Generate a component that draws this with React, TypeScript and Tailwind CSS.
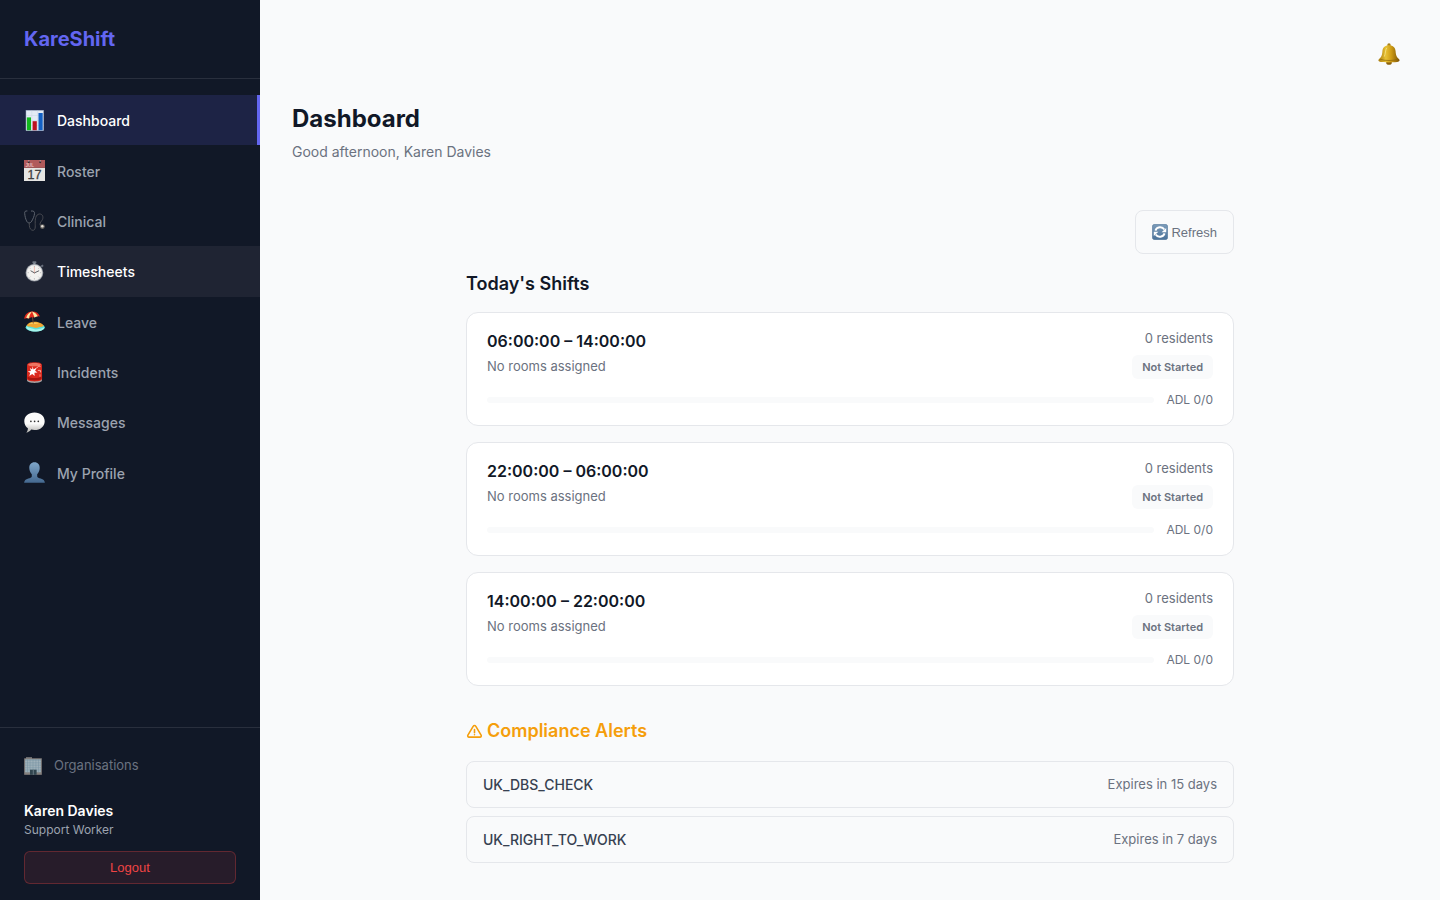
import { useState } from 'react';
import type { ReactNode } from 'react';

const ChartIcon = () => (
  <svg viewBox="0 0 21 21" className="w-[21px] h-[21px] shrink-0" aria-hidden="true">
    <rect x="2" y="0.3" width="17.6" height="20.4" fill="#e3ebf5" />
    <path d="M2 5.5h17.6M2 10.5h17.6M2 15.5h17.6M7.8 0.3v20.4M13.6 0.3v20.4" stroke="#c9d6e6" strokeWidth="0.5" />
    <rect x="2.8" y="7.4" width="4.2" height="13" fill="#12b81e" />
    <rect x="8.6" y="11.2" width="4.2" height="9.2" fill="#bd1220" />
    <rect x="14.5" y="3" width="4.2" height="17.4" fill="#1360c4" />
    <rect x="2" y="0.3" width="17.6" height="20.4" fill="none" stroke="#9fb0c8" strokeWidth="0.5" />
  </svg>
);

const CalendarIcon = () => (
  <svg viewBox="0 0 21 21" className="w-[21px] h-[21px] shrink-0" aria-hidden="true">
    <rect width="21" height="21" fill="#e6e5e3" />
    <rect width="21" height="7.8" fill="#b05a5b" />
    <rect y="7.4" width="21" height="0.6" fill="#8b4243" />
    <circle cx="4.8" cy="2.1" r="1.1" fill="#3b2a33" />
    <circle cx="16.2" cy="2.1" r="1.1" fill="#3b2a33" />
    <path d="M4.8 0v2M16.2 0v2" stroke="#c9c4c6" strokeWidth="0.6" />
    <text x="1.4" y="7" fontSize="4.6" fontWeight="700" fill="#e5bcbc" fontFamily="Liberation Sans, sans-serif">JUL</text>
    <text x="10.5" y="18.8" fontSize="12.5" fontWeight="400" textAnchor="middle" fill="#3f3f41" stroke="#3f3f41" strokeWidth="0.3" fontFamily="Liberation Sans, sans-serif">17</text>
  </svg>
);

const StethoscopeIcon = () => (
  <svg viewBox="0 0 21 21" className="w-[21px] h-[21px] shrink-0" fill="none" strokeLinecap="round" aria-hidden="true">
    <path d="M3 0.9C1.2 0.7 0.5 1.6 0.7 3.4C1 6.6 1.6 9 2.6 10.9C3.6 13.6 6.6 13.6 7.8 11C9 8.8 10.4 6 10.5 3.6C10.6 1.8 9.9 0.7 7.4 1" stroke="#676c76" strokeWidth="0.9" />
    <path d="M5.3 13V15.3C5.4 18.6 7.2 20.4 9 20.3C11.6 20.2 11.3 16.6 11.2 13.5C11.1 9.4 11.6 4.4 15.4 4C18.6 3.8 19.6 7 18.4 9.6C17.6 11.2 16 12.4 16 14.2C16 15.6 16.8 16.2 17.6 16.3" stroke="#494b52" strokeWidth="1" />
    <circle cx="18.4" cy="16.6" r="2.4" fill="#6a6763" />
    <circle cx="18.3" cy="16.2" r="1.2" fill="#e2ddd7" />
  </svg>
);

const StopwatchIcon = () => (
  <svg viewBox="0 0 21 21" className="w-[21px] h-[21px] shrink-0" aria-hidden="true">
    <rect x="8.4" y="0.2" width="4" height="2.2" rx="0.7" fill="#6d7480" />
    <rect x="9.4" y="1.8" width="2" height="2.2" fill="#8d95a0" />
    <path d="M16.6 4.8l2-1.3 1 1.5-1.6 1.5z" fill="#666d7a" />
    <circle cx="10.4" cy="11.7" r="8.9" fill="#7f858f" />
    <circle cx="10.4" cy="11.7" r="8.3" fill="#c9cbce" />
    <circle cx="10.4" cy="11.7" r="7.5" fill="#f3f2f0" />
    <path d="M10.4 4.9v1.3M10.4 17.2v1.3M3.6 11.7h1.3M15.9 11.7h1.3M5.6 6.9l.8.8M14.4 15.7l.8.8M15.2 6.9l-.8.8M6.4 15.7l-.8.8" stroke="#a5a5a8" strokeWidth="0.7" />
    <path d="M10.4 12.6V5.8" stroke="#ef9a88" strokeWidth="0.6" />
    <path d="M6.6 9.7l3.8 2.2 4.7-2.2" stroke="#4e5157" strokeWidth="0.9" fill="none" />
  </svg>
);

const BeachIcon = () => (
  <svg viewBox="0 0 21 21" className="w-[21px] h-[21px] shrink-0" aria-hidden="true">
    <ellipse cx="11.2" cy="16.4" rx="9.6" ry="4.1" fill="#58ded9" />
    <path d="M2.6 15.2c3 2 6 2.3 8.6 3.2c3-.2 7-1 9-2.2c.3 2.6-4.4 4.4-9 4.4s-9.2-1.9-8.6-5.4z" fill="#a5f5ec" />
    <path d="M2.6 14.8c1-2.6 4.2-4 8-4s8 1.7 9.2 4c-1.5 1.5-3.6 1-5.6 1.7c-2.3.8-4.2.2-6.2-.4c-1.900-.5-4.200-.2-5.400-1.300z" fill="#f0a531" />
    <path d="M4.5 13.2c2-1.7 7-2.3 10.5-1.2c-2 1.3-7.500 1-10.500 1.200z" fill="#f9c95d" />
    <path d="M8.3 5l1 7.5" stroke="#7a4a2c" strokeWidth="0.9" />
    <path d="M0.2 7.8C0.8 3.200 4 0.500 8 0.400C12 0.300 15 2.200 15.900 5.600C13.800 5 12 5.400 10.500 6.600C8.500 6 6.500 6.200 5 7.600C3.500 7.100 1.600 7 0.200 7.800z" fill="#e42a1c" />
    <path d="M8 0.400C5 1.500 2.600 4 2.300 7.100C3.200 7 4.200 7.200 5 7.600C5.300 4.600 6.500 2 8 0.400z" fill="#fae9a4" />
    <path d="M8 0.400C8.800 2 9.600 3.800 10.500 6.600C11.500 5.700 12.600 5.300 13.800 5.200C12.700 2.900 10.500 1.200 8 0.400z" fill="#fae9a4" />
  </svg>
);

const SirenIcon = () => (
  <svg viewBox="0 0 21 21" className="w-[21px] h-[21px] shrink-0" aria-hidden="true">
    <path d="M3 16.5h15v1.8c0 1.700-3.500 2.600-7.500 2.600S3 20 3 18.300z" fill="#a9a5a5" />
    <path d="M3.100 2.900C3.300 1 6.500 0.300 10.500 0.300s7.200 0.700 7.400 2.600l.2 13.900c0 1.700-3.600 2.600-7.600 2.600s-7.600-.9-7.600-2.600z" fill="#dc2a1e" />
    <path d="M4 2.700c.4-1.200 3.200-1.700 6.500-1.700s6.100.5 6.500 1.700c-.4 1-3.200 1.500-6.500 1.500S4.400 3.700 4 2.700z" fill="#ed7461" />
    <path d="M3.500 14.500c3.500 2 10.500 2 14 0v2.300c-1 2.300-13 2.300-14 0z" fill="#ab160f" />
    <path d="M8.600 4.300l.9 3.100 3.300-1.800-1.700 3.100 2.400 1.800-3.100.2.300 3.400-2.500-2.200-2.900 2.100.9-3.200-2.500-1.200 3.200-.7-1-3 2.300 1.700z" fill="#fff" />
    <path d="M12.800 6.200c.6-2 2.800-2.500 3.700-1.600M13.800 8.400h2.600v2" fill="none" stroke="#f9c2b8" strokeWidth="0.9" />
    <path d="M16 12.300v2.500" stroke="#f28b7d" strokeWidth="1" />
  </svg>
);

const SpeechIcon = () => (
  <svg viewBox="0 0 21 21" className="w-[21px] h-[21px] shrink-0" aria-hidden="true">
    <defs>
      <linearGradient id="bubble" x1="0" y1="0" x2="0" y2="1">
        <stop offset="0.55" stopColor="#fbfbfa" />
        <stop offset="1" stopColor="#b3b2af" />
      </linearGradient>
    </defs>
    <path d="M10.5 0.4C16.5 0.4 20.7 4 20.7 9.2C20.7 14.4 16.5 18 10.5 18C9.3 18 8.2 17.9 7.2 17.6C6 19.3 4.2 20.4 2.3 20.7C3.3 19.5 3.9 17.9 3.9 16.2C1.6 14.6 0.3 12.1 0.3 9.2C0.3 4 4.5 0.4 10.5 0.4z" fill="url(#bubble)" />
    <circle cx="6.9" cy="9.3" r="0.85" fill="#333" />
    <circle cx="10.6" cy="9.3" r="0.85" fill="#333" />
    <circle cx="14.3" cy="9.3" r="0.85" fill="#333" />
  </svg>
);

const PersonIcon = () => (
  <svg viewBox="0 0 21 21" className="w-[21px] h-[21px] shrink-0" aria-hidden="true">
    <defs>
      <linearGradient id="bust" x1="0" y1="0" x2="0" y2="1">
        <stop offset="0" stopColor="#7fa6c9" />
        <stop offset="1" stopColor="#44688f" />
      </linearGradient>
    </defs>
    <path d="M10.5 0.3C13.9 0.3 15.9 2.7 15.7 6.3C15.6 8.8 14.6 10.8 13.2 12.2V14.5C13.4 15.8 15 16 16.7 16.6C19.4 17.4 20.6 18.5 20.9 20.8H0.1C0.4 18.5 1.6 17.4 4.3 16.6C6 16 7.6 15.8 7.8 14.5V12.2C6.4 10.8 5.4 8.8 5.3 6.3C5.1 2.7 7.1 0.3 10.5 0.3z" fill="url(#bust)" />
  </svg>
);

const OfficeIcon = () => (
  <svg viewBox="0 0 18 18" className="w-[18px] h-[18px] shrink-0" aria-hidden="true">
    <rect x="2" y="0.3" width="6" height="1.5" fill="#8f8c8b" />
    <rect x="0.2" y="1.3" width="17.6" height="16.5" fill="#86817e" />
    <rect x="1.2" y="2.3" width="15.6" height="13" fill="#8fa6b3" />
    <path d="M1.2 4.6h15.6M1.2 7h15.6M1.2 9.4h15.6M1.2 11.8h15.6M1.2 14.2h15.6" stroke="#a9b7bf" strokeWidth="0.7" />
    <path d="M3.5 2.3v13M6.1 2.3v13M9 2.3v13M11.9 2.3v13M14.5 2.3v13" stroke="#77909f" strokeWidth="0.5" />
    <rect x="6" y="12.7" width="6.6" height="5.1" fill="#31454f" />
    <path d="M9.3 13v4.8" stroke="#8b9ba4" strokeWidth="0.6" />
  </svg>
);

const RefreshIcon = () => (
  <svg viewBox="0 0 16 16" className="w-4 h-4 shrink-0" aria-hidden="true">
    <defs>
      <linearGradient id="tile" x1="0" y1="0" x2="0" y2="1">
        <stop offset="0" stopColor="#7c9cba" />
        <stop offset="1" stopColor="#4b7299" />
      </linearGradient>
    </defs>
    <rect x="0.3" y="0.3" width="15.4" height="15.4" rx="2.6" fill="url(#tile)" stroke="#54789c" strokeWidth="0.6" />
    <path d="M3.4 6.6C4.600 2.700 10.200 2.100 12.300 5.400M12.600 9.400C11.400 13.300 5.800 13.900 3.700 10.600" fill="none" stroke="#fff" strokeWidth="1.900" />
    <path d="M14.200 4v4.300H9.600zM1.800 12V7.700h4.600z" fill="#fff" />
  </svg>
);

const BellIcon = () => (
  <svg viewBox="0 0 22 22" className="w-[22px] h-[22px]" aria-hidden="true">
    <defs>
      <linearGradient id="brass" x1="0" y1="0" x2="1" y2="0">
        <stop offset="0" stopColor="#a87a0c" />
        <stop offset="0.35" stopColor="#e8c235" />
        <stop offset="0.6" stopColor="#cf9d16" />
        <stop offset="1" stopColor="#7d5405" />
      </linearGradient>
    </defs>
    <circle cx="11" cy="2" r="1.7" fill="#a7801b" />
    <ellipse cx="11" cy="19.7" rx="2.8" ry="2" fill="#8c610d" />
    <path d="M11 2.3C15.2 2.300 17.300 4.700 17.600 8.300C17.900 12.300 18.500 14 20.900 16C21.900 16.800 21.800 18 20.700 18.600C18 19.800 4 19.800 1.300 18.600C0.200 18 0.100 16.800 1.100 16C3.500 14 4.100 12.300 4.400 8.300C4.700 4.700 6.800 2.300 11 2.300z" fill="url(#brass)" />
    <path d="M2.200 16.300c4 1.600 13.600 1.600 17.600 0" fill="none" stroke="#8a640d" strokeWidth="0.7" />
    <path d="M8.500 5.200c-1.200 1.800-1 5.500-2 8" fill="none" stroke="#f8e48a" strokeWidth="0.8" strokeLinecap="round" />
  </svg>
);

const WarningIcon = () => (
  <svg viewBox="0 0 17 17" className="w-[17px] h-[17px] shrink-0" fill="none" stroke="currentColor" strokeWidth="1.6" strokeLinejoin="round" strokeLinecap="round" aria-hidden="true">
    <path d="M7.3 3.2L1.9 12.2C1.4 13.2 2 14.1 3 14.1H14C15 14.1 15.6 13.2 15.1 12.2L9.7 3.2C9.2 2.3 7.8 2.3 7.3 3.2z" />
    <path d="M8.5 6.600v3.100M8.500 11.700v.1" />
  </svg>
);

const NAV: { label: string; icon: ReactNode }[] = [
  { label: 'Dashboard', icon: <ChartIcon /> },
  { label: 'Roster', icon: <CalendarIcon /> },
  { label: 'Clinical', icon: <StethoscopeIcon /> },
  { label: 'Timesheets', icon: <StopwatchIcon /> },
  { label: 'Leave', icon: <BeachIcon /> },
  { label: 'Incidents', icon: <SirenIcon /> },
  { label: 'Messages', icon: <SpeechIcon /> },
  { label: 'My Profile', icon: <PersonIcon /> },
];

const SHIFTS = [
  { start: '06:00:00', end: '14:00:00', residents: 0, done: 0, total: 0 },
  { start: '22:00:00', end: '06:00:00', residents: 0, done: 0, total: 0 },
  { start: '14:00:00', end: '22:00:00', residents: 0, done: 0, total: 0 },
];

const ALERTS = [
  { type: 'UK_DBS_CHECK', days: 15 },
  { type: 'UK_RIGHT_TO_WORK', days: 7 },
];

function Sidebar() {
  const [hovered, setHovered] = useState('Timesheets');

  return (
    <aside className="sticky top-0 h-screen w-[260px] shrink-0 bg-[#111827] flex flex-col">
      <div className="px-6 py-6 border-b border-white/10">
        <div className="text-xl leading-[30px] font-bold text-[#6366f1]">KareShift</div>
      </div>

      <nav className="flex-1 pt-4 overflow-y-auto">
        <div className="flex flex-col h-[403px]">
          {NAV.map(item => {
            const active = item.label === 'Dashboard';
            return (
              <a key={item.label} href="#" onMouseEnter={() => setHovered(item.label)}
                className={`flex-1 flex items-center gap-3 px-6 text-sm font-medium ${
                  active ? 'bg-[#6366f1]/15 text-white border-r-[3px] border-[#6366f1]'
                  : hovered === item.label ? 'bg-[#1f2433] text-white'
                  : 'text-[#9ca3af]'
                }`}>
                {item.icon}
                <span className="pt-0.5">{item.label}</span>
              </a>
            );
          })}
        </div>
      </nav>

      <div className="px-6 py-4 border-t border-white/10">
        <a href="#" className="flex items-center gap-3 h-11 text-[13px] text-[#6b7280]">
          <OfficeIcon />
          <span>Organisations</span>
        </a>
        <div className="mt-[13px] text-sm leading-5 font-semibold text-white">Karen Davies</div>
        <div className="text-xs leading-[18px] text-[#9ca3af]">Support Worker</div>
        <button className="mt-3 w-full h-[33px] rounded-md border border-[#ef4444]/30 bg-[#ef4444]/10 text-[13px] text-[#ef4444] font-['Liberation_Sans',sans-serif]">
          Logout
        </button>
      </div>
    </aside>
  );
}

export default function App() {
  return (
    <div className="min-h-screen flex bg-[#f9fafb] text-[#111827] font-['Inter',sans-serif]">
      <Sidebar />

      <main className="flex-1 min-w-0 p-8">
        <div className="flex justify-end">
          <button aria-label="Notifications" className="h-11 px-2 flex items-center">
            <BellIcon />
          </button>
        </div>

        <header className="mt-6">
          <h1 className="text-2xl leading-[38px] font-bold">Dashboard</h1>
          <p className="mt-1 text-sm leading-5 text-[#6b7280]">Good afternoon, Karen Davies</p>
        </header>

        <div className="max-w-3xl mx-auto mt-12">
          <div className="flex justify-end">
            <button className="h-11 px-4 flex items-center gap-[3px] rounded-lg border border-[#e5e7eb] text-[13px] text-[#6b7280] font-['Liberation_Sans',sans-serif]">
              <RefreshIcon />
              <span className="pt-0.5">Refresh</span>
            </button>
          </div>

          <section className="mt-4">
            <h2 className="text-lg leading-7 font-semibold">Today's Shifts</h2>
            <div className="mt-[14px] space-y-4">
              {SHIFTS.map(s => (
                <div key={s.start} className="px-5 py-4 bg-white border border-[#e5e7eb] rounded-xl">
                  <div className="flex justify-between">
                    <div>
                      <div className="text-base leading-6 font-semibold">{s.start} – {s.end}</div>
                      <div className="mt-[3px] text-[13px] leading-5 text-[#6b7280]">No rooms assigned</div>
                    </div>
                    <div className="flex flex-col items-end gap-2">
                      <span className="text-[13px] leading-[18px] text-[#6b7280]">{s.residents} residents</span>
                      <span className="px-[10px] rounded-md bg-[#f9fafb] text-[11px] leading-6 font-semibold text-[#6b7280]">Not Started</span>
                    </div>
                  </div>
                  <div className="mt-3 flex items-center gap-3">
                    <div className="flex-1 h-[6px] rounded-full bg-[#f9fafb] overflow-hidden">
                      <div className="h-full bg-[#6366f1]" style={{ width: `${s.total ? (s.done / s.total) * 100 : 0}%` }} />
                    </div>
                    <span className="text-xs leading-[18px] text-[#6b7280]">ADL {s.done}/{s.total}</span>
                  </div>
                </div>
              ))}
            </div>
          </section>

          <section className="mt-[31px]">
            <h2 className="flex items-center gap-1 text-lg leading-7 font-semibold text-[#f59e0b]">
              <WarningIcon /> Compliance Alerts
            </h2>
            <div className="mt-4 space-y-2">
              {ALERTS.map(a => (
                <div key={a.type} className="flex items-center justify-between px-4 py-3 border border-[#e5e7eb] rounded-lg">
                  <span className="text-sm leading-[21px] font-medium text-[#374151]">{a.type}</span>
                  <span className="text-[13px] leading-[21px] text-[#6b7280]">Expires in {a.days} days</span>
                </div>
              ))}
            </div>
          </section>
        </div>
      </main>
    </div>
  );
}
